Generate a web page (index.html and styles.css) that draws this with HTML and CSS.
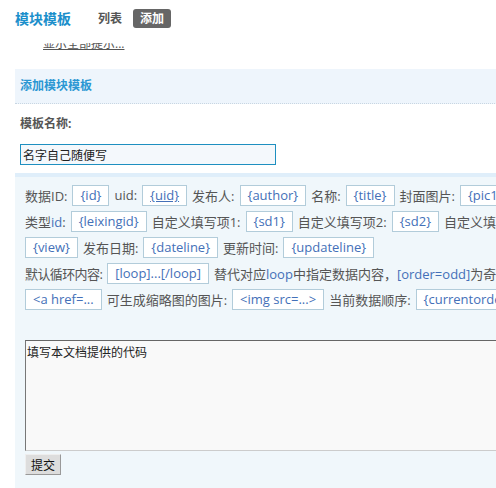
FILE: index.html
```html
<!DOCTYPE html>
<html lang="zh-CN">
<head>
  <meta charset="UTF-8">
  <title>模块模板</title>
  <link rel="stylesheet" href="styles.css">
</head>
<body>
  <div class="page">
    <!-- top nav -->
    <div class="topnav">
      <span class="topnav-title">模块模板</span>
      <a class="topnav-link" href="#">列表</a>
      <a class="topnav-link active" href="#">添加</a>
    </div>

    <!-- hint line, mostly scrolled out of its box -->
    <div class="tips">
      <a class="tips-text" href="#">显示全部提示...</a>
    </div>

    <div class="panel-head">添加模块模板</div>

    <div class="field">
      <div class="field-label">模板名称:</div>
      <input class="field-input" type="text" value="名字自己随便写">
    </div>

    <div class="code-box">
      <div class="tag-row">
        <span>数据ID:</span><span class="tag">{id}</span>
        <span>uid:</span><span class="tag tag-hover">{uid}</span>
        <span>发布人:</span><span class="tag">{author}</span>
        <span>名称:</span><span class="tag">{title}</span>
        <span>封面图片:</span><span class="tag">{pic1}</span>
        <span>浏览量:</span>
      </div>
      <div class="tag-row">
        <span>类型<em>id</em>:</span><span class="tag">{leixingid}</span>
        <span>自定义填写项1:</span><span class="tag">{sd1}</span>
        <span>自定义填写项2:</span><span class="tag">{sd2}</span>
        <span>自定义填写项3:</span><span class="tag">{sd3}</span>
      </div>
      <div class="tag-row">
        <span class="tag">{view}</span>
        <span>发布日期:</span><span class="tag">{dateline}</span>
        <span>更新时间:</span><span class="tag">{updateline}</span>
      </div>
      <div class="tag-row">
        <span class="narrow">默认循环内容:</span><span class="tag">[loop]...[/loop]</span>
        <span>替代对应<em>loop</em>中指定数据内容，<em>[order=odd]</em>为奇数行内容</span>
      </div>
      <div class="tag-row">
        <span class="tag">&lt;a href=...</span>
        <span>可生成缩略图的图片:</span><span class="tag">&lt;img src=...&gt;</span>
        <span>当前数据顺序:</span><span class="tag">{currentorder}</span>
      </div>

      <textarea class="code-input">填写本文档提供的代码</textarea>
      <div class="actions">
        <button class="submit-btn" type="button">提交</button>
      </div>
    </div>
  </div>
</body>
</html>
```

FILE: styles.css
```css
html {
  overflow: hidden;
}

body {
  margin: 0;
  background-color: #fff;
  color: #555;
  font-family: "Open Sans", "Noto Sans CJK SC", sans-serif;
  font-size: 12px;
}

.page {
  width: 760px;
  padding-left: 15px;
}

/* Top navigation */
.topnav {
  display: flex;
  align-items: center;
  height: 36px;
}

.topnav-title {
  color: #1b8fcb;
  font-size: 14px;
  font-weight: bold;
  margin-right: 27px;
}

.topnav-link {
  color: #555;
  font-size: 12px;
  font-weight: bold;
  text-decoration: none;
  margin-right: 11px;
  line-height: 19px;
}

.topnav-link.active {
  background-color: #666;
  color: #fff;
  border-radius: 3px;
  padding: 0 7px;
}

/* Hint line, clipped so only the lower half shows */
.tips {
  height: 10px;
  overflow: hidden;
  margin-left: 28px;
  margin-top: 7px;
}

.tips-text {
  display: block;
  margin-top: -8px;
  line-height: 17px;
  color: #555;
  font-size: 12px;
}

.panel-head {
  margin-top: 16px;
  height: 34px;
  line-height: 34px;
  padding-left: 5px;
  background-color: #eef5fc;
  border-bottom: 1px dotted #c8d6e2;
  color: #2a97d3;
  font-weight: bold;
}

.field {
  padding: 13px 5px 8px 5px;
}

.field-label {
  font-weight: bold;
  color: #555;
  line-height: 14px;
  margin-bottom: 13px;
}

.field-input {
  display: block;
  width: 256px;
  height: 21px;
  box-sizing: border-box;
  border: 1px solid #1e8fc0;
  background-color: #f4f8fc;
  padding: 0 2px;
  font-family: inherit;
  font-size: 12px;
  color: #222;
}

/* Template code area */
.code-box {
  border-top: 4px solid #dfeefa;
  background-color: #f0f7fb;
  padding: 5px 10px 20px 10px;
  min-height: 320px;
}

.tag-row {
  display: flex;
  align-items: center;
  gap: 5px;
  height: 26px;
  font-size: 13px;
  white-space: nowrap;
  color: #555;
}

.tag-row .narrow {
  letter-spacing: -0.6px;
}

.tag-row em {
  font-style: normal;
  color: #4470b8;
}

.tag {
  display: inline-block;
  height: 21px;
  line-height: 19px;
  box-sizing: border-box;
  padding: 0 7px;
  border: 1px solid #b2ccda;
  background-color: #fff;
  color: #4470b8;
}

.tag-hover {
  text-decoration: underline;
}

.code-input {
  display: block;
  width: 700px;
  height: 111px;
  box-sizing: border-box;
  margin-top: 28px;
  border: 1px solid #ccc;
  border-top-color: #666;
  border-left-color: #777;
  background-color: #f9f9f9;
  padding: 2px 1px;
  font-family: inherit;
  font-size: 12px;
  color: #222;
  resize: none;
}

.actions {
  margin-top: 3px;
}

.submit-btn {
  height: 21px;
  padding: 0 5px;
  border: 1px solid #999;
  border-top-color: #eee;
  border-left-color: #eee;
  background-color: #ddd;
  font-family: inherit;
  font-size: 12px;
  color: #111;
}
```
